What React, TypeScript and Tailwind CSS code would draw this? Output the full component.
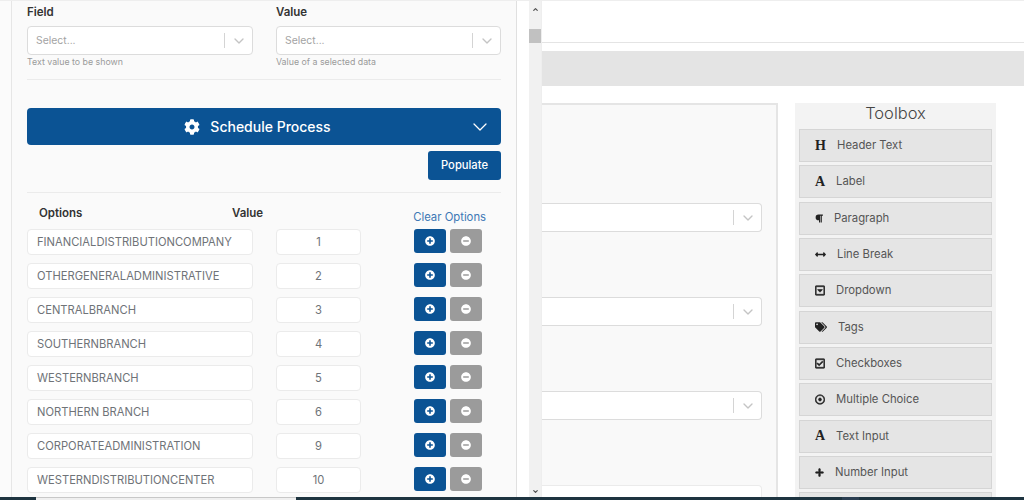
import { ChevronDown } from 'lucide-react'
import type { ReactNode } from 'react'
import {
  FaArrowsAltH,
  FaCog,
  FaMinusCircle,
  FaParagraph,
  FaPlus,
  FaPlusCircle,
  FaRegCaretSquareDown,
  FaRegCheckSquare,
  FaRegDotCircle,
  FaTags,
} from 'react-icons/fa'

const OPTIONS = [
  { name: 'FINANCIALDISTRIBUTIONCOMPANY', value: '1' },
  { name: 'OTHERGENERALADMINISTRATIVE', value: '2' },
  { name: 'CENTRALBRANCH', value: '3' },
  { name: 'SOUTHERNBRANCH', value: '4' },
  { name: 'WESTERNBRANCH', value: '5' },
  { name: 'NORTHERN BRANCH', value: '6' },
  { name: 'CORPORATEADMINISTRATION', value: '9' },
  { name: 'WESTERNDISTRIBUTIONCENTER', value: '10' },
]

const glyph = "font-['Liberation_Serif',serif] font-bold text-[#222] leading-none"

const TOOLS: { label: string; icon: ReactNode }[] = [
  { label: 'Header Text', icon: <span className={`${glyph} w-[11px] text-[14px]`}>H</span> },
  { label: 'Label', icon: <span className={`${glyph} w-[10px] text-[14px]`}>A</span> },
  { label: 'Paragraph', icon: <FaParagraph className="w-[8px] text-[9px] text-[#222]" /> },
  { label: 'Line Break', icon: <FaArrowsAltH className="w-[11px] text-[11px] text-[#222]" /> },
  { label: 'Dropdown', icon: <FaRegCaretSquareDown stroke="currentColor" strokeWidth={28} className="w-[10px] text-[11px] text-[#222]" /> },
  { label: 'Tags', icon: <FaTags className="w-[12px] text-[12px] text-[#222]" /> },
  { label: 'Checkboxes', icon: <FaRegCheckSquare stroke="currentColor" strokeWidth={28} className="w-[10px] text-[11px] text-[#222]" /> },
  { label: 'Multiple Choice', icon: <FaRegDotCircle stroke="currentColor" strokeWidth={28} className="w-[10px] text-[11px] text-[#222]" /> },
  { label: 'Text Input', icon: <span className={`${glyph} w-[10px] text-[14px]`}>A</span> },
  { label: 'Number Input', icon: <FaPlus stroke="currentColor" strokeWidth={30} className="w-[9px] text-[9px] text-[#222]" /> },
  { label: '', icon: null },
]

function SelectBox({ className = '' }: { className?: string }) {
  return (
    <div className={`flex h-[29px] items-center rounded-[4px] border border-[#dcdcdc] bg-white ${className}`}>
      <span className="flex-1 pl-[8px] pt-[1px] text-[10.4px] text-[#a3a3a3]">Select...</span>
      <span className="h-[15px] w-px bg-[#d4d4d4]" />
      <span className="flex w-[27px] justify-center text-[#c4c4c4]">
        <ChevronDown size={16} strokeWidth={2} />
      </span>
    </div>
  )
}

function OptionRow({ name, value }: { name: string; value: string }) {
  return (
    <div className="flex h-[26px] items-start">
      <div className="flex h-[26px] w-[226px] items-center rounded-[4px] border border-[#ebebeb] bg-white pl-[9px] text-[11.2px] text-[#6f7378]">
        {name}
      </div>
      <div className="ml-[23px] flex h-[26px] w-[85px] items-center justify-center rounded-[4px] border border-[#ebebeb] bg-white text-[11.2px] text-[#6f7378]">
        {value}
      </div>
      <div className="ml-[53px] flex gap-[4px]">
        <button className="flex h-[24px] w-[32px] items-center justify-center rounded-[3px] bg-[#0b5394] text-[10px] text-white">
          <FaPlusCircle />
        </button>
        <button className="flex h-[24px] w-[32px] items-center justify-center rounded-[3px] bg-[#9b9b9b] text-[10px] text-white">
          <FaMinusCircle />
        </button>
      </div>
    </div>
  )
}

export default function App() {
  return (
    <div className="flex h-[500px] w-[1024px] flex-col overflow-hidden bg-white font-['Inter',sans-serif]">
      <div className="flex min-h-0 flex-1 border-t border-[#eeeeee]">
        {/* Properties panel */}
        <div className="w-[12px] shrink-0 border-r border-[#e6e6e6] bg-[#fbfbfb]" />
        <div className="w-[505px] shrink-0 border-r border-[#e0e0e0] bg-[#fafafa] pl-[15px] pr-[15px]">
          <div className="flex gap-[23px] pt-[3px]">
            <div className="w-[226px]">
              <div className="text-[11.5px] font-semibold leading-[16px] text-[#333]">Field</div>
              <SelectBox className="mt-[6px]" />
              <div className="mt-[1px] text-[8.8px] leading-[11px] text-[#9a9a9a]">Text value to be shown</div>
            </div>
            <div className="w-[225px]">
              <div className="text-[11.5px] font-semibold leading-[16px] text-[#333]">Value</div>
              <SelectBox className="mt-[6px]" />
              <div className="mt-[1px] text-[8.8px] leading-[11px] text-[#9a9a9a]">Value of a selected data</div>
            </div>
          </div>
          <div className="mt-[12px] h-px w-[474px] bg-[#ebebeb]" />
          <button className="relative mt-[28px] flex h-[37px] w-[474px] items-center justify-center gap-[10px] rounded-[4px] bg-[#0b5394] pr-[13px] text-[14px] font-medium text-white">
            <FaCog className="text-[16px]" />
            Schedule Process
            <ChevronDown size={24} strokeWidth={1.25} className="absolute right-[9px]" />
          </button>
          <div className="mt-[6px] flex w-[474px] justify-end">
            <button className="h-[29px] w-[73px] rounded-[3px] bg-[#0b5394] text-[11.2px] font-medium text-white">
              Populate
            </button>
          </div>
          <div className="mt-[12px] h-px w-[474px] bg-[#ebebeb]" />
          <div className="mt-[12px] flex h-[24px] w-[474px] items-start text-[11.5px] font-semibold text-[#333]">
            <span className="ml-[12px] w-[193px] leading-[16px]">Options</span>
            <span className="leading-[16px]">Value</span>
            <span className="ml-[150px] mt-[4px] text-[11.3px] font-normal leading-[16px] text-[#3d78b5]">Clear Options</span>
          </div>
          <div className="flex flex-col gap-[8px]">
            {OPTIONS.map((o) => (
              <OptionRow key={o.value} name={o.name} value={o.value} />
            ))}
          </div>
        </div>

        {/* Panel scrollbar */}
        <div className="w-[12px] shrink-0 bg-white" />
        <div className="relative w-[12px] shrink-0 bg-[#f1f1f1]">
          <span className="absolute left-[3px] top-[5px] text-[#505050]">
            <ChevronDown size={7} strokeWidth={4} className="rotate-180" />
          </span>
          <span className="absolute left-0 top-[28px] h-[14px] w-full bg-[#c1c1c1]" />
          <span className="absolute bottom-[2px] left-[3px] text-[#505050]">
            <ChevronDown size={7} strokeWidth={4} />
          </span>
        </div>

        {/* Form builder page */}
        <div className="min-w-0 flex-1 border-l border-[#eeeeee]">
          <div className="h-[42px] border-b border-[#e4e4e4]" />
          <div className="mt-[8px] h-[35px] bg-[#e4e4e4]" />
          <div className="mt-[17px] flex items-start">
            <div className="h-[420px] w-[236px] border-r-2 border-t-2 border-[#e5e5e5] bg-[#f9f9f9]">
              <div className="mt-[98px] flex flex-col gap-[65px]">
                {[0, 1, 2].map((i) => (
                  <div key={i} className="flex h-[29px] w-[220px] items-center justify-end rounded-r-[4px] border border-l-0 border-[#dcdcdc] bg-white">
                    <span className="h-[15px] w-px bg-[#d4d4d4]" />
                    <span className="flex w-[27px] justify-center text-[#c4c4c4]">
                      <ChevronDown size={16} strokeWidth={2} />
                    </span>
                  </div>
                ))}
              </div>
              <div className="mt-[65px] h-[30px] w-[220px] rounded-tr-[4px] border border-l-0 border-[#ebebeb] bg-white" />
            </div>
            <div className="ml-[17px] h-[420px] w-[201px] bg-[#f3f3f3] px-[4px]">
              <div className="h-[24px] text-center text-[16.5px] font-light leading-[20px] text-[#444]">Toolbox</div>
              <div className="mt-[1px] flex flex-col gap-[3.35px] pt-[1px]">
                {TOOLS.map((t, i) => (
                  <div key={i} className="flex h-[33px] items-center gap-[11px] border border-[#d5d5d5] bg-[#e5e5e5] pl-[15px] text-[11.3px] text-[#555]">
                    {t.icon}
                    {t.label}
                  </div>
                ))}
              </div>
            </div>
          </div>
        </div>
      </div>

      {/* Window edge */}
      <div className="flex h-[3px] shrink-0 bg-[#1e3440]">
        <div className="ml-[36px] w-[260px] border-t border-[#c8c8c8] bg-[#f0f0f0]" />
        <div className="ml-[546px] w-[17px] bg-[#2b3f52]" />
      </div>
    </div>
  )
}
